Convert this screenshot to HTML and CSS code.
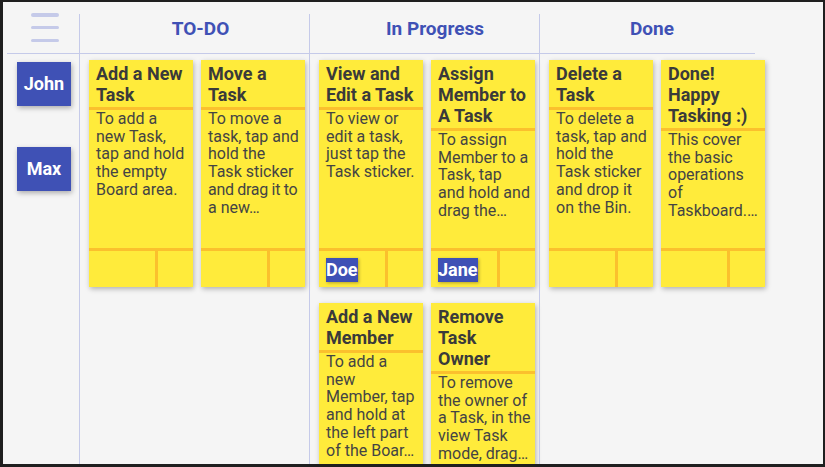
FILE: index.html
```html
<!DOCTYPE html>
<html lang="en">
<head>
<meta charset="utf-8">
<title>Taskboard</title>
<link rel="stylesheet" href="styles.css">
</head>
<body>
<div class="app">
  <div class="board-head">
    <div class="menu-cell">
      <div class="hamburger"><span></span><span></span><span></span></div>
    </div>
    <div class="col-head todo-head">TO-DO</div>
    <div class="col-head prog-head">In Progress</div>
    <div class="col-head done-head">Done</div>
  </div>
  <div class="board-body">
    <div class="members">
      <div class="member">John</div>
      <div class="member">Max</div>
    </div>
    <div class="col todo-col">
      <div class="card">
        <div class="card-title">Add a New Task</div>
        <div class="card-text">To add a new Task, tap and hold the empty Board area.</div>
        <div class="card-foot"><div class="owner-cell"></div><div class="extra-cell"></div></div>
      </div>
      <div class="card">
        <div class="card-title">Move a Task</div>
        <div class="card-text">To move a task, tap and hold the Task sticker <span class="snug">and drag it to</span> a new…</div>
        <div class="card-foot"><div class="owner-cell"></div><div class="extra-cell"></div></div>
      </div>
    </div>
    <div class="col prog-col">
      <div class="card">
        <div class="card-title">View and Edit a Task</div>
        <div class="card-text">To view or edit a task, just tap the Task sticker.</div>
        <div class="card-foot"><div class="owner-cell"><span class="owner">Doe</span></div><div class="extra-cell"></div></div>
      </div>
      <div class="card">
        <div class="card-title">Assign Member to A Task</div>
        <div class="card-text">To assign Member to a Task, tap and hold and drag the…</div>
        <div class="card-foot"><div class="owner-cell"><span class="owner">Jane</span></div><div class="extra-cell"></div></div>
      </div>
      <div class="card">
        <div class="card-title">Add a New Member</div>
        <div class="card-text">To add a new Member, tap and hold at the left part of the Boar…</div>
        <div class="card-foot"><div class="owner-cell"></div><div class="extra-cell"></div></div>
      </div>
      <div class="card">
        <div class="card-title">Remove Task Owner</div>
        <div class="card-text">To remove the owner of a Task, in the view Task mode, drag…</div>
        <div class="card-foot"><div class="owner-cell"></div><div class="extra-cell"></div></div>
      </div>
    </div>
    <div class="col done-col">
      <div class="card">
        <div class="card-title">Delete a Task</div>
        <div class="card-text">To delete a task, tap and hold the Task sticker and drop it on the Bin.</div>
        <div class="card-foot"><div class="owner-cell"></div><div class="extra-cell"></div></div>
      </div>
      <div class="card">
        <div class="card-title">Done! Happy Tasking :)</div>
        <div class="card-text">This cover the basic operations of Taskboard.…</div>
        <div class="card-foot"><div class="owner-cell"></div><div class="extra-cell"></div></div>
      </div>
    </div>
  </div>
</div>
</body>
</html>
```

FILE: styles.css
```css
html, body {
  margin: 0;
  padding: 0;
  background: #1f1f1f;
  width: 825px;
  height: 467px;
  overflow: hidden;
}

.app {
  margin: 2px 2px 0 3px;
  width: 820px;
  height: 462px;
  background: #f5f5f5;
  overflow: hidden;
  font-family: Roboto, "Liberation Sans", sans-serif;
  padding-left: 4px;
  box-sizing: border-box;
}

.board-head {
  display: flex;
  width: 748px;
  height: 52px;
  border-bottom: 1px solid #c5cae9;
  box-sizing: border-box;
}

.menu-cell {
  width: 72px;
  display: flex;
  justify-content: center;
  padding-top: 11px;
  padding-left: 4px;
  box-sizing: border-box;
}

.hamburger {
  display: flex;
  flex-direction: column;
  gap: 9.3px;
}

.hamburger span {
  display: block;
  width: 28px;
  height: 3.5px;
  border-radius: 2px;
  background: #c5cae9;
}

.col-head {
  margin-top: 12px;
  border-left: 1px solid #c5cae9;
  color: #3f51b5;
  font-weight: 700;
  font-size: 19px;
  text-align: center;
  padding-top: 3px;
  box-sizing: border-box;
}

.todo-head { width: 230px; padding-left: 12px; }
.prog-head { width: 230px; padding-left: 21px; }
.done-head { width: 216px; padding-left: 9px; }

.board-body {
  display: flex;
  height: 410px;
}

.members {
  width: 72px;
  display: flex;
  flex-direction: column;
  gap: 41px;
  padding: 8px 0 0 10px;
  box-sizing: border-box;
}

.member {
  width: 54px;
  height: 44px;
  line-height: 44px;
  background: #3f51b5;
  color: #fff;
  font-weight: 700;
  font-size: 18px;
  text-align: center;
  box-shadow: 1px 2px 5px rgba(0, 0, 0, 0.3);
}

.col {
  border-left: 1px solid #c5cae9;
  display: grid;
  grid-template-columns: 104px 104px;
  grid-auto-rows: 227px;
  column-gap: 8px;
  row-gap: 16px;
  align-content: start;
  padding: 6px 0 0 9px;
  box-sizing: border-box;
}

.todo-col { width: 230px; }
.prog-col { width: 230px; }
.done-col { width: 216px; }

.card {
  background: #ffeb3b;
  display: flex;
  flex-direction: column;
  box-shadow: 1px 2px 5px rgba(0, 0, 0, 0.28);
  color: #3a3a3a;
}

.card-title {
  font-weight: 700;
  font-size: 18px;
  line-height: 21px;
  padding: 3px 6px 2px 7px;
  border-bottom: 3px solid #fbc02d;
}

.card-text {
  flex: 1;
  font-size: 16px;
  line-height: 17.7px;
  color: #444;
  padding: 0 4px 0 7px;
  overflow: hidden;
}

.snug {
  letter-spacing: -0.3px;
  white-space: nowrap;
}

.card-foot {
  display: flex;
  height: 39px;
  border-top: 3px solid #fbc02d;
  box-sizing: border-box;
}

.owner-cell {
  width: 69px;
  border-right: 3px solid #fbc02d;
  padding: 7px 0 0 7px;
  box-sizing: border-box;
}

.extra-cell {
  flex: 1;
}

.owner {
  display: inline-block;
  background: #3f51b5;
  color: #fff;
  font-weight: 700;
  font-size: 18px;
  line-height: 24px;
  height: 24px;
  vertical-align: top;
  box-shadow: 1px 1px 3px rgba(0, 0, 0, 0.3);
}
```
